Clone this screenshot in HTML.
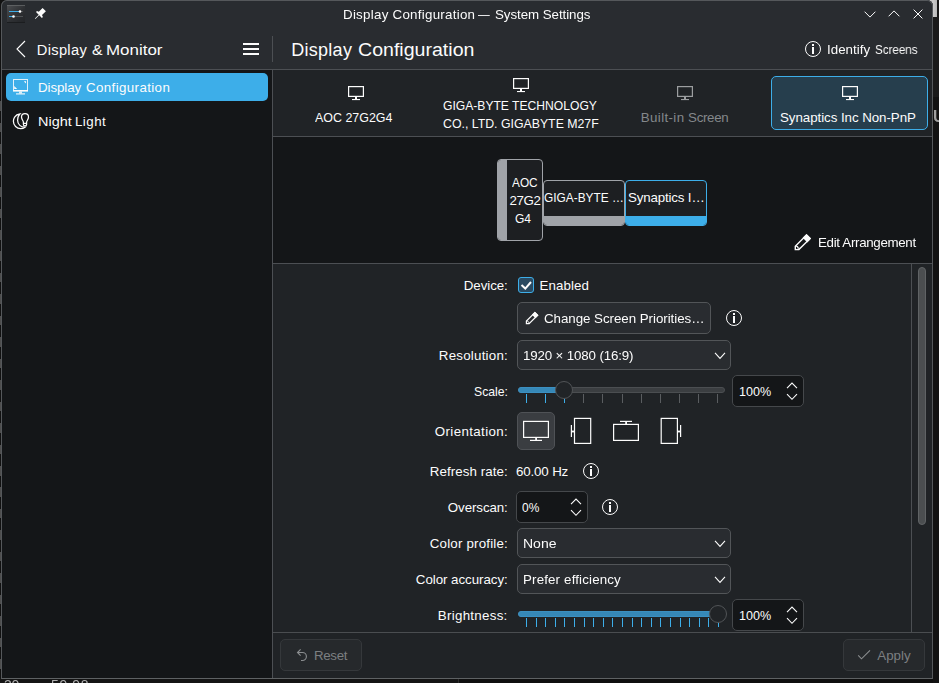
<!DOCTYPE html>
<html lang="en"><head><meta charset="utf-8"><title>Display Configuration — System Settings</title>
<style>
*{box-sizing:border-box;margin:0;padding:0}
html,body{width:939px;height:683px;overflow:hidden;background:#111111}
body{position:relative;font-family:"Liberation Sans",sans-serif;font-size:13.333px;color:#fcfcfc}
.a{position:absolute}
.t{position:absolute;white-space:nowrap;line-height:20px;height:20px;transform-origin:0 50%}
#win{position:absolute;left:1px;top:0;width:932px;height:678px;background:#202326;border-radius:6px 6px 0 0;overflow:hidden}
#winborder{position:absolute;left:1px;top:0;width:932px;height:679px;border:1px solid #55585b;border-bottom-color:#5e6163;border-radius:6px 6px 0 0;pointer-events:none}
#head{left:0;top:0;width:932px;height:69px;background:#292c30}
.sep{background:#4c4f53}
#side{left:1px;top:70px;width:270px;height:608px;background:#141618}
#sel{left:5px;top:73px;width:262px;height:28px;background:#3daee9;border-radius:5px}
#tabs{left:272px;top:70px;width:660px;height:66px;background:#202326}
#seltab{left:770px;top:76px;width:157px;height:54px;background:#263e4d;border:1px solid #3daee9;border-radius:5px}
#arr{left:272px;top:137px;width:660px;height:126px;background:#141618}
.scr{position:absolute;background:#1d1f22;border:1px solid #a0a3a8;border-radius:4px;overflow:hidden}
.btn{position:absolute;background:#292c30;border:1px solid #525558;border-radius:5px}
.btn.dis{background:#26292c;border-color:#35383b}
.field{position:absolute;background:#141618;border:1px solid #45484b;border-radius:5px}
.track{position:absolute;height:6px;border-radius:3px;background:#3b3e41;border:1px solid #4b4e51}
.fill{position:absolute;height:6px;border-radius:3px;background:#3688b7;border:1px solid #3b8fc0}
.knob{position:absolute;width:18px;height:18px;border-radius:50%;background:#212427;border:1px solid #515457}
.tick{position:absolute;width:1px;height:9px;background:#5a5d60}
.tick.on{background:#3daee9}
svg{position:absolute;overflow:visible}
.g{will-change:transform}

</style></head>
<body>
<div class="a" style="left:0;top:678px;width:939px;height:5px;overflow:hidden;background:linear-gradient(90deg,#141414 0,#141414 458px,#2a2a2a 458px,#2a2a2a 459px,#0f0f0f 459px)">
  <span class="a g" style="left:3.5px;top:0.3px;font-size:14px;line-height:15px;letter-spacing:-0.2px;color:#aeaeae;white-space:nowrap">30</span>
  <span class="a g" style="left:50.5px;top:0.3px;font-size:14px;line-height:15px;letter-spacing:0.6px;color:#aeaeae;white-space:nowrap">59.98</span>
</div>
<div class="a" style="left:926px;top:0;width:11px;height:17px;background:linear-gradient(90deg,#c9c9c9 0,#c9c9c9 70%,#b6b6b6 100%)"></div>
<div class="a" style="left:937px;top:0;width:2px;height:17px;background:#171717"></div>
<div class="a" style="left:933px;top:17px;width:6px;height:80px;background:#1a1a1a"></div>
<div class="a" style="left:933px;top:97px;width:6px;height:586px;background:#121212"></div>
<span class="a g" style="left:933.2px;top:107px;font-size:16px;font-weight:bold;line-height:20px;color:#a0a0a0">U</span>
<div id="edge" class="a" style="left:0;top:0;width:1px;height:683px"><div class="a" style="left:0;top:659.0px;width:1px;height:9.5px;background:#4e4e4e"></div><div class="a" style="left:0;top:637.5px;width:1px;height:9.5px;background:#4e4e4e"></div><div class="a" style="left:0;top:616.1px;width:1px;height:9.5px;background:#4e4e4e"></div><div class="a" style="left:0;top:594.6px;width:1px;height:9.5px;background:#4e4e4e"></div><div class="a" style="left:0;top:573.2px;width:1px;height:9.5px;background:#4e4e4e"></div><div class="a" style="left:0;top:551.8px;width:1px;height:9.5px;background:#4e4e4e"></div><div class="a" style="left:0;top:530.3px;width:1px;height:9.5px;background:#4e4e4e"></div><div class="a" style="left:0;top:508.9px;width:1px;height:9.5px;background:#4e4e4e"></div><div class="a" style="left:0;top:487.4px;width:1px;height:9.5px;background:#4e4e4e"></div><div class="a" style="left:0;top:466.0px;width:1px;height:9.5px;background:#4e4e4e"></div><div class="a" style="left:0;top:444.5px;width:1px;height:9.5px;background:#4e4e4e"></div><div class="a" style="left:0;top:423.1px;width:1px;height:9.5px;background:#4e4e4e"></div><div class="a" style="left:0;top:401.6px;width:1px;height:9.5px;background:#4e4e4e"></div><div class="a" style="left:0;top:380.2px;width:1px;height:9.5px;background:#4e4e4e"></div><div class="a" style="left:0;top:358.7px;width:1px;height:9.5px;background:#4e4e4e"></div><div class="a" style="left:0;top:337.2px;width:1px;height:9.5px;background:#4e4e4e"></div><div class="a" style="left:0;top:315.8px;width:1px;height:9.5px;background:#4e4e4e"></div><div class="a" style="left:0;top:294.4px;width:1px;height:9.5px;background:#4e4e4e"></div><div class="a" style="left:0;top:272.9px;width:1px;height:9.5px;background:#4e4e4e"></div><div class="a" style="left:0;top:251.4px;width:1px;height:9.5px;background:#4e4e4e"></div><div class="a" style="left:0;top:230.0px;width:1px;height:9.5px;background:#4e4e4e"></div><div class="a" style="left:0;top:208.6px;width:1px;height:9.5px;background:#4e4e4e"></div><div class="a" style="left:0;top:187.1px;width:1px;height:9.5px;background:#4e4e4e"></div><div class="a" style="left:0;top:165.7px;width:1px;height:9.5px;background:#4e4e4e"></div><div class="a" style="left:0;top:144.2px;width:1px;height:9.5px;background:#4e4e4e"></div><div class="a" style="left:0;top:122.8px;width:1px;height:9.5px;background:#4e4e4e"></div><div class="a" style="left:0;top:101.3px;width:1px;height:9.5px;background:#4e4e4e"></div></div>
<div id="win">
  <div id="head" class="a"></div>
  <div class="a sep" style="left:0;top:69px;width:932px;height:1px"></div>
  <div class="a sep" style="left:271px;top:36px;width:1px;height:26px"></div>
  <div id="side" class="a"></div>
  <div class="a sep" style="left:271px;top:70px;width:1px;height:608px"></div>
  <div id="sel" class="a"></div>
  <div id="tabs" class="a"></div>
  <div class="a sep" style="left:272px;top:136px;width:660px;height:1px"></div>
  <div id="arr" class="a"></div>
  <div class="a sep" style="left:272px;top:263px;width:660px;height:1px"></div>
  <div class="a sep" style="left:910px;top:264px;width:1px;height:368px"></div>
  <div class="a" style="left:917px;top:267px;width:8px;height:258px;border-radius:4px;background:#4b4e50;border:1px solid #606365"></div>
  <div class="a sep" style="left:272px;top:632px;width:660px;height:1px"></div>
  <div id="seltab" class="a"></div>

  <!-- arrangement boxes -->
  <div class="scr" style="left:496px;top:159px;width:46px;height:82px"><div class="a" style="left:0;top:0;width:9px;height:80px;background:#a0a3a8"></div></div>
  <div class="scr" style="left:542px;top:180px;width:82px;height:46px"><div class="a" style="left:0;top:35px;width:80px;height:9px;background:#a0a3a8"></div></div>
  <div class="scr" style="left:624px;top:180px;width:82px;height:46px;border-color:#3daee9"><div class="a" style="left:0;top:35px;width:80px;height:9px;background:#3daee9"></div></div>

  <!-- form controls -->
  <div class="a" style="left:517px;top:277px;width:16px;height:16px;border-radius:3px;background:#2a4a61;border:1px solid #3daee9"></div>
  <div class="btn" style="left:516px;top:302px;width:194px;height:32px"></div>
  <div class="btn" style="left:516px;top:340px;width:214px;height:30px"></div>
  <div class="track" style="left:517px;top:387px;width:207px"></div>
  <div class="fill" style="left:517px;top:387px;width:46px"></div>
  <div class="field" style="left:731px;top:375px;width:72px;height:32px"></div>
  <div class="btn" style="left:516px;top:412px;width:38px;height:38px;background:#3a3d41;border-color:#4f5256"></div>
  <div class="field" style="left:515px;top:491px;width:72px;height:32px"></div>
  <div class="btn" style="left:516px;top:528px;width:214px;height:30px"></div>
  <div class="btn" style="left:516px;top:564px;width:214px;height:30px"></div>
  <div class="track" style="left:517px;top:611px;width:207px"></div>
  <div class="fill" style="left:517px;top:611px;width:200px"></div>
  <div class="field" style="left:731px;top:599px;width:72px;height:32px"></div>
  <div class="tick on" style="left:525px;top:394px"></div>
<div class="tick on" style="left:544px;top:394px"></div>
<div class="tick on" style="left:563px;top:394px"></div>
<div class="tick" style="left:582px;top:394px"></div>
<div class="tick" style="left:601px;top:394px"></div>
<div class="tick" style="left:621px;top:394px"></div>
<div class="tick" style="left:640px;top:394px"></div>
<div class="tick" style="left:659px;top:394px"></div>
<div class="tick" style="left:678px;top:394px"></div>
<div class="tick" style="left:697px;top:394px"></div>
<div class="tick" style="left:716px;top:394px"></div>
<div class="tick on" style="left:525px;top:618px"></div>
<div class="tick on" style="left:535px;top:618px"></div>
<div class="tick on" style="left:544px;top:618px"></div>
<div class="tick on" style="left:554px;top:618px"></div>
<div class="tick on" style="left:563px;top:618px"></div>
<div class="tick on" style="left:573px;top:618px"></div>
<div class="tick on" style="left:583px;top:618px"></div>
<div class="tick on" style="left:592px;top:618px"></div>
<div class="tick on" style="left:602px;top:618px"></div>
<div class="tick on" style="left:611px;top:618px"></div>
<div class="tick on" style="left:621px;top:618px"></div>
<div class="tick on" style="left:631px;top:618px"></div>
<div class="tick on" style="left:640px;top:618px"></div>
<div class="tick on" style="left:650px;top:618px"></div>
<div class="tick on" style="left:659px;top:618px"></div>
<div class="tick on" style="left:669px;top:618px"></div>
<div class="tick on" style="left:679px;top:618px"></div>
<div class="tick on" style="left:688px;top:618px"></div>
<div class="tick on" style="left:698px;top:618px"></div>
<div class="tick on" style="left:707px;top:618px"></div>
<div class="tick on" style="left:717px;top:618px"></div>
  <div class="knob" style="left:554px;top:381px"></div>
  <div class="knob" style="left:708px;top:605px"></div>
  <div class="a" style="left:272px;top:632px;width:660px;height:46px;background:#202326;border-top:1px solid #4a4d50"></div>
  <div class="btn dis" style="left:279px;top:639px;width:82px;height:32px"></div>
  <div class="btn dis" style="left:842px;top:639px;width:82px;height:32px"></div>

  <div class="a" style="left:-1px;top:0;width:939px;height:683px">
<span class="t g" style="left:342.50px;top:4.50px;font-size:13.333px;letter-spacing:0.267px;color:#fcfcfc">Display Configuration</span>
<span class="t g" style="left:478.20px;top:4.50px;font-size:13.333px;color:#fcfcfc;transform:scaleX(0.8857)">—</span>
<span class="t g" style="left:495.00px;top:4.50px;font-size:13.333px;letter-spacing:-0.060px;color:#fcfcfc">System Settings</span>
<span class="t" style="left:36.80px;top:40.00px;font-size:14.667px;letter-spacing:0.312px;color:#fcfcfc">Display</span>
<span class="t" style="left:92.30px;top:40.00px;font-size:14.667px;color:#fcfcfc;transform:scaleX(1.0800)">&amp;</span>
<span class="t" style="left:106.04px;top:40.00px;font-size:14.667px;color:#fcfcfc;transform:scaleX(1.1565)">Monitor</span>
<span class="t" style="left:291.30px;top:39.70px;font-size:18px;letter-spacing:0.264px;color:#fcfcfc">Display</span>
<span class="t" style="left:357.70px;top:39.70px;font-size:18px;color:#fcfcfc;transform:scaleX(1.0871)">Configuration</span>
<span class="t g" style="left:827.10px;top:39.50px;font-size:13.333px;letter-spacing:0.028px;color:#fcfcfc">Identify</span>
<span class="t g" style="left:874.80px;top:39.50px;font-size:13.333px;color:#fcfcfc;transform:scaleX(0.8694)">Screens</span>
<span class="t" style="left:38.00px;top:77.50px;font-size:13.333px;letter-spacing:-0.089px;color:#fcfcfc">Display</span>
<span class="t" style="left:86.00px;top:77.50px;font-size:13.333px;letter-spacing:0.378px;color:#fcfcfc">Configuration</span>
<span class="t" style="left:37.91px;top:111.50px;font-size:13.333px;color:#fcfcfc;transform:scaleX(1.0851)">Night</span>
<span class="t" style="left:75.00px;top:111.50px;font-size:13.333px;letter-spacing:0.450px;color:#fcfcfc">Light</span>
<span class="t" style="left:315.00px;top:107.50px;font-size:13.333px;color:#fcfcfc;transform:scaleX(0.9335)">AOC 27G2G4</span>
<span class="t" style="left:443.40px;top:95.50px;font-size:13.333px;color:#fcfcfc;transform:scaleX(0.9087)">GIGA-BYTE TECHNOLOGY</span>
<span class="t" style="left:443.40px;top:113.50px;font-size:13.333px;color:#fcfcfc;transform:scaleX(0.9236)">CO., LTD. GIGABYTE M27F</span>
<span class="t" style="left:640.80px;top:107.50px;font-size:13.333px;letter-spacing:0.368px;color:#84888b">Built-in</span>
<span class="t" style="left:688.10px;top:107.50px;font-size:13.333px;letter-spacing:-0.323px;color:#84888b">Screen</span>
<span class="t" style="left:780.00px;top:107.50px;font-size:13.333px;letter-spacing:-0.058px;color:#fcfcfc">Synaptics Inc Non-PnP</span>
<span class="t" style="left:512.00px;top:172.50px;font-size:13.333px;color:#fcfcfc;transform:scaleX(0.8887)">AOC</span>
<span class="t" style="left:509.40px;top:190.50px;font-size:13.333px;letter-spacing:-0.397px;color:#fcfcfc">27G2</span>
<span class="t" style="left:515.40px;top:208.80px;font-size:13.333px;color:#fcfcfc;transform:scaleX(0.9038)">G4</span>
<span class="t" style="left:544.40px;top:187.50px;font-size:13.333px;color:#fcfcfc;transform:scaleX(0.8904)">GIGA-BYTE …</span>
<span class="t" style="left:628.00px;top:187.50px;font-size:13.333px;letter-spacing:-0.163px;color:#fcfcfc">Synaptics I…</span>
<span class="t g" style="left:818.20px;top:232.50px;font-size:13.333px;letter-spacing:-0.321px;color:#fcfcfc">Edit Arrangement</span>
<span class="t" style="left:463.80px;top:275.50px;font-size:13.333px;letter-spacing:-0.073px;color:#fcfcfc">Device:</span>
<span class="t" style="left:438.80px;top:345.50px;font-size:13.333px;letter-spacing:0.232px;color:#fcfcfc">Resolution:</span>
<span class="t" style="left:473.80px;top:381.50px;font-size:13.333px;color:#fcfcfc;transform:scaleX(0.9163)">Scale:</span>
<span class="t" style="left:434.80px;top:421.50px;font-size:13.333px;letter-spacing:0.373px;color:#fcfcfc">Orientation:</span>
<span class="t" style="left:429.80px;top:461.80px;font-size:13.333px;letter-spacing:0.080px;color:#fcfcfc">Refresh rate:</span>
<span class="t" style="left:447.80px;top:497.50px;font-size:13.333px;letter-spacing:-0.092px;color:#fcfcfc">Overscan:</span>
<span class="t" style="left:429.80px;top:533.50px;font-size:13.333px;letter-spacing:0.188px;color:#fcfcfc">Color profile:</span>
<span class="t" style="left:415.80px;top:569.50px;font-size:13.333px;letter-spacing:-0.042px;color:#fcfcfc">Color accuracy:</span>
<span class="t" style="left:437.80px;top:605.50px;font-size:13.333px;letter-spacing:0.283px;color:#fcfcfc">Brightness:</span>
<span class="t" style="left:539.60px;top:275.50px;font-size:13.333px;letter-spacing:0.050px;color:#fcfcfc">Enabled</span>
<span class="t g" style="left:544.40px;top:308.50px;font-size:13.333px;letter-spacing:-0.040px;color:#fcfcfc">Change Screen Priorities…</span>
<span class="t g" style="left:523.00px;top:345.50px;font-size:13.333px;letter-spacing:-0.151px;color:#fcfcfc">1920 × 1080 (16:9)</span>
<span class="t" style="left:738.56px;top:381.50px;font-size:13.333px;color:#fcfcfc;transform:scaleX(0.9447)">100%</span>
<span class="t" style="left:738.56px;top:605.50px;font-size:13.333px;color:#fcfcfc;transform:scaleX(0.9447)">100%</span>
<span class="t" style="left:516.00px;top:461.80px;font-size:13.333px;letter-spacing:-0.154px;color:#fcfcfc">60.00 Hz</span>
<span class="t" style="left:522.00px;top:497.50px;font-size:13.333px;color:#fcfcfc;transform:scaleX(0.8963)">0%</span>
<span class="t g" style="left:522.55px;top:533.50px;font-size:13.333px;color:#fcfcfc;transform:scaleX(1.0509)">None</span>
<span class="t g" style="left:522.60px;top:569.50px;font-size:13.333px;letter-spacing:0.153px;color:#fcfcfc">Prefer efficiency</span>
<span class="t" style="left:314.00px;top:645.70px;font-size:13.333px;letter-spacing:-0.354px;color:#7c7f81">Reset</span>
<span class="t" style="left:877.20px;top:645.70px;font-size:13.333px;letter-spacing:0.056px;color:#7c7f81">Apply</span>
<svg width="939" height="683" viewBox="0 0 939 683" style="left:0;top:0"><defs><linearGradient id="ag" x1="0" y1="0" x2="1" y2="1"><stop offset="0" stop-color="#4d4f52"/><stop offset="0.55" stop-color="#2e3033"/><stop offset="1" stop-color="#232528"/></linearGradient></defs>
<rect x="7" y="5" width="18" height="18" fill="url(#ag)"/>
<rect x="7" y="5" width="18" height="1" fill="#6a6c6e" opacity="0.7"/>
<rect x="7" y="22" width="18" height="1" fill="#1b1d1f"/>
<rect x="9" y="11" width="10.5" height="1" fill="#3daee9"/><rect x="20.5" y="11" width="2.5" height="1" fill="#4f5255"/><circle cx="20" cy="11.5" r="1.3" fill="#fcfcfc"/>
<rect x="9" y="16" width="4" height="1" fill="#3daee9"/><rect x="14.5" y="16" width="8.5" height="1" fill="#4f5255"/><circle cx="13.5" cy="16.5" r="1.3" fill="#fcfcfc"/>
<g fill="#fcfcfc" stroke="none"><path d="M42.6 7.9 L45.9 11.2 L42 15.1 L42.9 16.9 L41.9 17.9 L39.2 15.2 L35.4 19 L34.9 18.5 L38.7 14.7 L36 12 L37 11 L38.8 11.8 Z"/></g>
<path d="M864.6 11.7 L870 17.1 L875.4 11.7" fill="none" stroke="#fcfcfc" stroke-width="1"/>
<path d="M888.6 16.3 L894 10.9 L899.4 16.3" fill="none" stroke="#fcfcfc" stroke-width="1"/>
<path d="M913.6 9.6 L922.4 18.4 M922.4 9.6 L913.6 18.4" fill="none" stroke="#fcfcfc" stroke-width="1"/>
<path d="M25 41 L17 49 L25 57" fill="none" stroke="#fcfcfc" stroke-width="1.1"/>
<rect x="243" y="43" width="16" height="2" fill="#fcfcfc"/>
<rect x="243" y="48" width="16" height="2" fill="#fcfcfc"/>
<rect x="243" y="53" width="16" height="2" fill="#fcfcfc"/>
<circle cx="813" cy="49" r="7.5" fill="none" stroke="#fcfcfc" stroke-width="1"/><rect x="812" y="44" width="2" height="2" fill="#fcfcfc"/><rect x="812" y="47" width="2" height="7" fill="#fcfcfc"/>
<circle cx="734" cy="318" r="7.5" fill="none" stroke="#fcfcfc" stroke-width="1"/><rect x="733" y="313" width="2" height="2" fill="#fcfcfc"/><rect x="733" y="316" width="2" height="7" fill="#fcfcfc"/>
<circle cx="591" cy="471" r="7.5" fill="none" stroke="#fcfcfc" stroke-width="1"/><rect x="590" y="466" width="2" height="2" fill="#fcfcfc"/><rect x="590" y="469" width="2" height="7" fill="#fcfcfc"/>
<circle cx="610" cy="507" r="7.5" fill="none" stroke="#fcfcfc" stroke-width="1"/><rect x="609" y="502" width="2" height="2" fill="#fcfcfc"/><rect x="609" y="505" width="2" height="7" fill="#fcfcfc"/>
<rect x="13.5" y="79.5" width="14" height="11" fill="none" stroke="#fcfcfc" stroke-width="1" opacity="0.85"/><rect x="13" y="90" width="15" height="1.6" fill="#fcfcfc"/><rect x="19" y="91.5" width="3" height="2" fill="#fcfcfc" opacity="0.8"/><rect x="16" y="93.3" width="9" height="1.2" fill="#fcfcfc" opacity="0.9"/><path d="M23.8 81.2 L26 81.2 L26 83.4 Z" fill="#fcfcfc"/><path d="M14.2 86 L17.2 89 L14.2 89 Z" fill="#fcfcfc"/>
<path d="M20 113.9 C14.5 114.6 13.4 119.3 13.4 121.3 C13.4 125.6 16.8 128.6 20.6 128.6 C22.5 128.6 24 128 25 127.2 C21 127.4 17.6 124.4 17.6 120.3 C17.6 117.6 18.6 115.4 20 113.9 Z" fill="none" stroke="#fcfcfc" stroke-width="1.25"/>
<path d="M23.4 122.3 L23.4 124.6 C23.4 125.4 24 125.9 25 125.9 C26 125.9 26.6 125.4 26.6 124.6 L26.6 122.3 C26.6 120.8 28.5 119.4 28.5 117 C28.5 115 27 113.5 25 113.5 C23 113.5 21.5 115 21.5 117 C21.5 119.4 23.4 120.8 23.4 122.3 Z M23.4 123.3 L26.6 123.3" fill="none" stroke="#fcfcfc" stroke-width="1.25"/>
<rect x="348.6" y="86.6" width="14.8" height="9.8" fill="none" stroke="#fcfcfc" stroke-width="1.2"/><rect x="355" y="97" width="2" height="2" fill="#fcfcfc"/><rect x="352" y="99" width="8" height="1.1" fill="#fcfcfc"/>
<rect x="513.6" y="78.6" width="14.8" height="9.8" fill="none" stroke="#fcfcfc" stroke-width="1.2"/><rect x="520" y="89" width="2" height="2" fill="#fcfcfc"/><rect x="517" y="91" width="8" height="1.1" fill="#fcfcfc"/>
<rect x="677.6" y="86.6" width="14.8" height="9.8" fill="none" stroke="#9c9ea0" stroke-width="1.2"/><rect x="684" y="97" width="2" height="2" fill="#9c9ea0"/><rect x="681" y="99" width="8" height="1.1" fill="#9c9ea0"/>
<rect x="842.6" y="86.6" width="14.8" height="9.8" fill="none" stroke="#fcfcfc" stroke-width="1.2"/><rect x="849" y="97" width="2" height="2" fill="#fcfcfc"/><rect x="846" y="99" width="8" height="1.1" fill="#fcfcfc"/>
<g transform="translate(794.5 234) scale(1.0000)" fill="none" stroke="#fcfcfc" stroke-width="1.4" stroke-linejoin="miter"><path d="M0.8 15.6 L0.8 12.2 L12 1 L15.6 4.6 L4.4 15.6 Z"/><path d="M9.2 3.8 L12 1 L15.6 4.6 L12.8 7.4 Z" fill="#fcfcfc"/><path d="M1.2 12.4 C2.6 12 3.6 12.6 3.3 13.8 C4.4 13.5 4.8 14.4 4.4 15.4" stroke-width="1.1"/></g>
<g transform="translate(525.8 311.8) scale(0.7576)" fill="none" stroke="#fcfcfc" stroke-width="1.6" stroke-linejoin="miter"><path d="M0.8 15.6 L0.8 12.2 L12 1 L15.6 4.6 L4.4 15.6 Z"/><path d="M9.2 3.8 L12 1 L15.6 4.6 L12.8 7.4 Z" fill="#fcfcfc"/><path d="M1.2 12.4 C2.6 12 3.6 12.6 3.3 13.8 C4.4 13.5 4.8 14.4 4.4 15.4" stroke-width="1.1"/></g>
<path d="M521.5 285 L525.3 288.6 L531 282" fill="none" stroke="#fcfcfc" stroke-width="2"/>
<path d="M715.0 352.85 L720 358.35 L725.0 352.85" fill="none" stroke="#fcfcfc" stroke-width="1.1"/>
<path d="M715.0 540.85 L720 546.35 L725.0 540.85" fill="none" stroke="#fcfcfc" stroke-width="1.1"/>
<path d="M715.0 576.85 L720 582.35 L725.0 576.85" fill="none" stroke="#fcfcfc" stroke-width="1.1"/>
<path d="M787.0 388.20000000000005 L792 383.0 L797.0 388.20000000000005" fill="none" stroke="#fcfcfc" stroke-width="1.1"/>
<path d="M787.0 394.09999999999997 L792 399.3 L797.0 394.09999999999997" fill="none" stroke="#fcfcfc" stroke-width="1.1"/>
<path d="M571.0 504.20000000000005 L576 499.0 L581.0 504.20000000000005" fill="none" stroke="#fcfcfc" stroke-width="1.1"/>
<path d="M571.0 510.1 L576 515.3000000000001 L581.0 510.1" fill="none" stroke="#fcfcfc" stroke-width="1.1"/>
<path d="M787.0 612.2 L792 607.0 L797.0 612.2" fill="none" stroke="#fcfcfc" stroke-width="1.1"/>
<path d="M787.0 618.1 L792 623.3000000000001 L797.0 618.1" fill="none" stroke="#fcfcfc" stroke-width="1.1"/>
<rect x="523.6" y="421.4" width="24.8" height="16" fill="none" stroke="#fcfcfc" stroke-width="1.2"/><rect x="535.2" y="438" width="1.8" height="2" fill="#fcfcfc"/><rect x="530" y="439.8" width="12" height="1.2" fill="#fcfcfc"/>
<rect x="574.5" y="418.4" width="16.2" height="25" fill="none" stroke="#fcfcfc" stroke-width="1.2"/><rect x="570.8" y="425" width="1.2" height="12" fill="#fcfcfc"/><rect x="572" y="430.6" width="2" height="1.8" fill="#fcfcfc"/>
<rect x="613.6" y="424.4" width="24.8" height="16" fill="none" stroke="#fcfcfc" stroke-width="1.2"/><rect x="625.2" y="422" width="1.8" height="2" fill="#fcfcfc"/><rect x="620" y="420.8" width="12" height="1.2" fill="#fcfcfc"/>
<rect x="661.2" y="418.4" width="16.2" height="25" fill="none" stroke="#fcfcfc" stroke-width="1.2"/><rect x="680" y="425" width="1.2" height="12" fill="#fcfcfc"/><rect x="678" y="430.6" width="2" height="1.8" fill="#fcfcfc"/>
<path d="M300.6 649.4 L297.5 652.5 L300.6 655.6 M297.5 652.5 L302.4 652.5 C304.7 652.5 306.4 654.3 306.4 656.5 C306.4 658.8 304.6 660.5 302.4 660.5 L301 660.5" fill="none" stroke="#8b8e90" stroke-width="1.1"/>
<path d="M858.2 655.4 L861.5 658.8 L870 650.4" fill="none" stroke="#8b8e90" stroke-width="1.1"/></svg>
  </div>
</div>
<div id="winborder"></div>

</body></html>
